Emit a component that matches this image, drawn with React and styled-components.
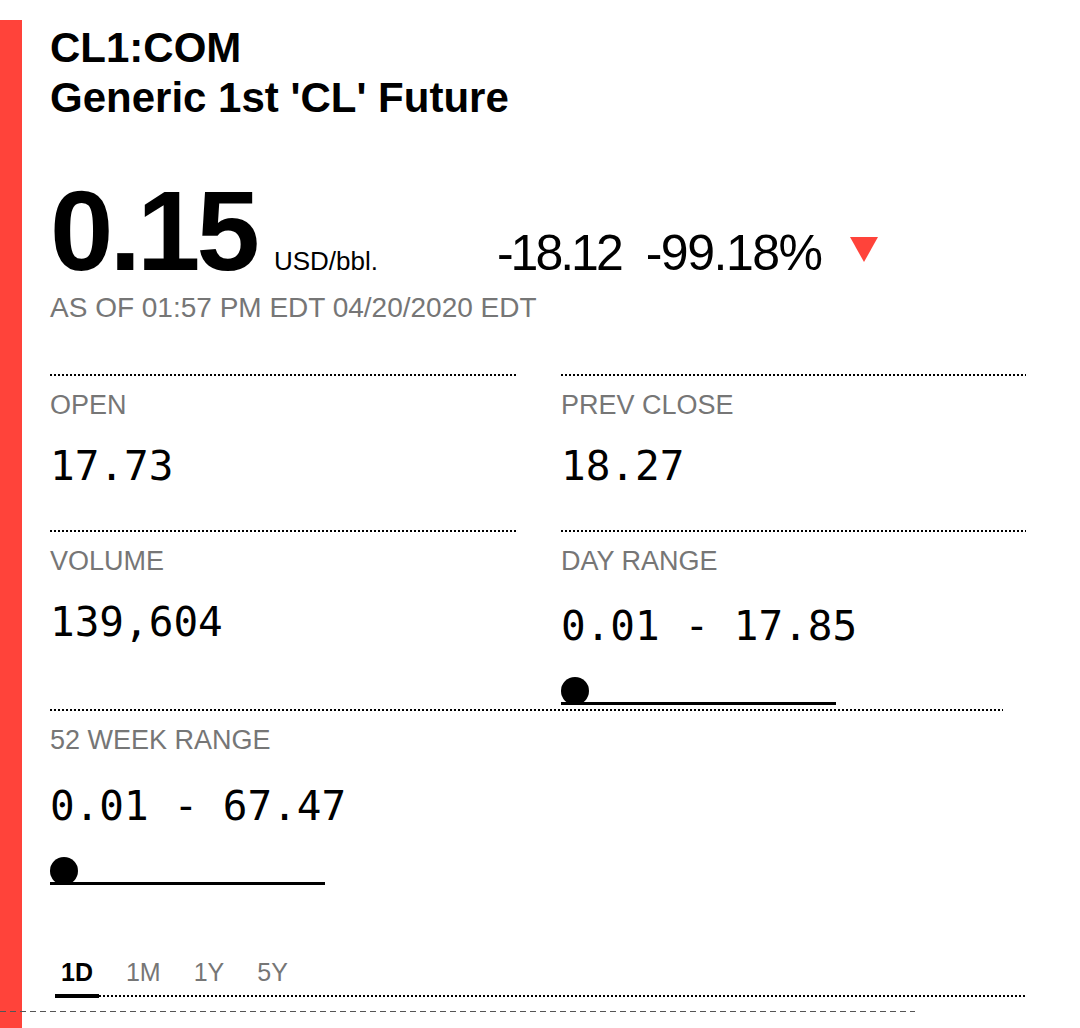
import styled, { createGlobalStyle } from "styled-components";

const GlobalStyle = createGlobalStyle`
  body {
    margin: 0;
    background: #fff;
    color: #000;
    font-family: "Liberation Sans", Arial, sans-serif;
  }
`;

const dots = "repeating-linear-gradient(to right, #000 0 2px, transparent 2px 4px)";

const Page = styled.div`
  margin-top: 20px;
  min-height: calc(100vh - 20px);
  box-sizing: border-box;
  border-left: 22px solid #ff433a;
  padding: 3px 54px 0 28px;
`;

const Symbol = styled.h1`
  margin: 0;
  font-size: 42px;
  line-height: 50px;
  font-weight: 700;
`;

const Name = styled.h2`
  margin: 0;
  font-size: 42px;
  line-height: 50px;
  font-weight: 700;
`;

const PriceRow = styled.div`
  display: flex;
  align-items: baseline;
  margin-top: 51px;
`;

const Price = styled.span`
  font-size: 114px;
  line-height: 114px;
  font-weight: 700;
  letter-spacing: -4px;
`;

const Unit = styled.span`
  font-size: 26px;
  margin-left: 18px;
`;

const Change = styled.span`
  margin-left: 119px;
  font-size: 50px;
  letter-spacing: -3px;
`;

const ChangePct = styled.span`
  margin-left: 25px;
  letter-spacing: -1.5px;
`;

const DownArrow = styled.span`
  display: inline-block;
  margin: 0 0 8px 29px;
  width: 0;
  height: 0;
  border-left: 14px solid transparent;
  border-right: 14px solid transparent;
  border-top: 25px solid #ff433a;
`;

const Timestamp = styled.div`
  margin-top: 3px;
  font-size: 28px;
  line-height: 1.2;
  color: #767676;
`;

const StatsGrid = styled.div`
  display: grid;
  grid-template-columns: 466px 465px;
  column-gap: 45px;
  margin-top: 49px;
`;

const Stat = styled.div`
  grid-column: ${(p) => (p.$wide ? "1 / -1" : "auto")};
  width: ${(p) => (p.$wide ? "953px" : "auto")};
  padding: 15px 0 ${(p) => (p.$range ? "4px" : "40px")};
  background: ${dots} top left / 100% 2px no-repeat;
`;

const Label = styled.div`
  font-size: 27px;
  line-height: 1.2;
  color: #767676;
`;

const Value = styled.div`
  margin-top: ${(p) => (p.$range ? "25px" : "21px")};
  font-family: "DejaVu Sans Mono", "Liberation Mono", monospace;
  font-size: 41px;
  line-height: 48px;
  white-space: pre;
`;

const Track = styled.div`
  position: relative;
  margin-top: 52px;
  width: 275px;
  height: 3px;
  background: #000;
`;

const Knob = styled.span`
  position: absolute;
  left: ${(p) => p.$pos}%;
  bottom: 0;
  width: 28px;
  height: 28px;
  border-radius: 50%;
  background: #000;
`;

const TabBar = styled.div`
  display: flex;
  gap: 21px;
  margin: 68px 0 0 5px;
  background: ${dots} left calc(100% - 1px) / 100% 2px no-repeat;
`;

const Tab = styled.button`
  padding: 0 6px 7px;
  border: 0;
  border-bottom: 4px solid ${(p) => (p.$active ? "#000" : "transparent")};
  background: none;
  font-family: "Liberation Sans", Arial, sans-serif;
  font-size: 25px;
  line-height: 30px;
  font-weight: ${(p) => (p.$active ? 700 : 400)};
  color: ${(p) => (p.$active ? "#000" : "#767676")};
  cursor: pointer;
`;

const DashedRule = styled.div`
  margin: 13px 0 0 -50px;
  width: 915px;
  height: 1px;
  background: repeating-linear-gradient(to right, #555 0 6px, transparent 6px 10px);
`;

const stats = [
  { label: "OPEN", value: "17.73" },
  { label: "PREV CLOSE", value: "18.27" },
  { label: "VOLUME", value: "139,604" },
  { label: "DAY RANGE", value: "0.01 - 17.85", range: true },
  { label: "52 WEEK RANGE", value: "0.01 - 67.47", range: true, wide: true },
];

const tabs = ["1D", "1M", "1Y", "5Y"];

export default function App() {
  return (
    <>
      <GlobalStyle />
      <Page>
        <Symbol>CL1:COM</Symbol>
        <Name>Generic 1st 'CL' Future</Name>

        <PriceRow>
          <Price>0.15</Price>
          <Unit>USD/bbl.</Unit>
          <Change>
            -18.12
            <ChangePct>-99.18%</ChangePct>
            <DownArrow />
          </Change>
        </PriceRow>
        <Timestamp>AS OF 01:57 PM EDT 04/20/2020 EDT</Timestamp>

        <StatsGrid>
          {stats.map((s) => (
            <Stat key={s.label} $range={s.range} $wide={s.wide}>
              <Label>{s.label}</Label>
              <Value $range={s.range}>{s.value}</Value>
              {s.range && (
                <Track>
                  <Knob $pos={0} />
                </Track>
              )}
            </Stat>
          ))}
        </StatsGrid>

        <TabBar>
          {tabs.map((t, i) => (
            <Tab key={t} $active={i === 0}>
              {t}
            </Tab>
          ))}
        </TabBar>
        <DashedRule />
      </Page>
    </>
  );
}
